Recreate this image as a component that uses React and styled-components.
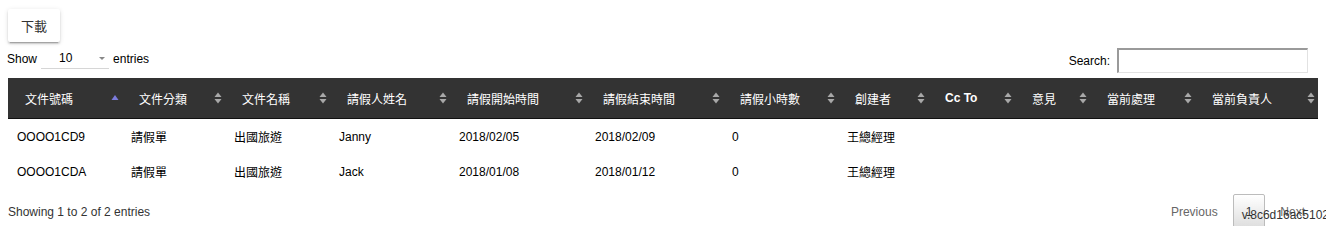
import styled, { createGlobalStyle } from 'styled-components';

const columns = [
  { key: 'no', label: '文件號碼', width: 114, sort: 'asc' },
  { key: 'type', label: '文件分類', width: 103 },
  { key: 'name', label: '文件名稱', width: 105 },
  { key: 'person', label: '請假人姓名', width: 120 },
  { key: 'start', label: '請假開始時間', width: 136 },
  { key: 'end', label: '請假結束時間', width: 137 },
  { key: 'hours', label: '請假小時數', width: 115 },
  { key: 'creator', label: '創建者', width: 90 },
  { key: 'cc', label: 'Cc To', width: 87, bold: true },
  { key: 'opinion', label: '意見', width: 75 },
  { key: 'current', label: '當前處理', width: 105 },
  { key: 'owner', label: '當前負責人', width: 123 },
];

const rows = [
  { no: 'OOOO1CD9', type: '請假單', name: '出國旅遊', person: 'Janny', start: '2018/02/05', end: '2018/02/09', hours: '0', creator: '王總經理' },
  { no: 'OOOO1CDA', type: '請假單', name: '出國旅遊', person: 'Jack', start: '2018/01/08', end: '2018/01/12', hours: '0', creator: '王總經理' },
];

const GlobalStyle = createGlobalStyle`
  html, body {
    margin: 0;
    height: 226px;
    overflow: hidden;
  }
  body {
    font-family: "Liberation Sans", Arial, "Noto Sans CJK TC", sans-serif;
    font-size: 12px;
    color: #333;
    background: #fff;
  }
`;

function SortIcon({ dir }) {
  if (dir === 'asc') {
    return (
      <svg width="8" height="12" viewBox="0 0 8 12">
        <path d="M4 3 L7.5 8 L0.5 8 Z" fill="#7b7bdc" />
      </svg>
    );
  }
  return (
    <svg width="8" height="12" viewBox="0 0 8 12">
      <path d="M4 0.5 L7.5 5 L0.5 5 Z" fill="#a8a8a8" />
      <path d="M4 11.5 L7.5 7 L0.5 7 Z" fill="#a8a8a8" />
    </svg>
  );
}

export default function App() {
  return (
    <Page>
      <GlobalStyle />
      <DownloadButton>下載</DownloadButton>
      <Controls>
        <LengthControl>
          Show
          <SelectBox>
            <span>10</span>
            <Caret />
          </SelectBox>
          entries
        </LengthControl>
        <Filter>
          Search:
          <SearchInput type="search" />
        </Filter>
      </Controls>
      <Table>
        <colgroup>
          {columns.map((c) => (
            <col key={c.key} style={{ width: c.width }} />
          ))}
        </colgroup>
        <thead>
          <tr>
            {columns.map((c) => (
              <Th key={c.key} $bold={c.bold}>
                <HeadInner>
                  <span>{c.label}</span>
                  <SortIcon dir={c.sort} />
                </HeadInner>
              </Th>
            ))}
          </tr>
        </thead>
        <tbody>
          {rows.map((r) => (
            <tr key={r.no}>
              {columns.map((c) => (
                <Td key={c.key}>{r[c.key] || ''}</Td>
              ))}
            </tr>
          ))}
        </tbody>
      </Table>
      <Footer>
        <Info>Showing 1 to 2 of 2 entries</Info>
        <Pagination>
          <PageButton>Previous</PageButton>
          <PageButton $current>1</PageButton>
          <PageButton>Next</PageButton>
        </Pagination>
      </Footer>
      <Version>v.8c6d16ac5102</Version>
    </Page>
  );
}

const Page = styled.div`
  position: relative;
  box-sizing: border-box;
  height: 226px;
  overflow: hidden;
  padding: 9px 8px 0 8px;
`;

const DownloadButton = styled.button`
  display: block;
  height: 33px;
  width: 52px;
  padding: 0;
  border: none;
  border-radius: 2px;
  background: #fff;
  color: #333;
  font-family: "Liberation Sans", "Noto Sans CJK TC", sans-serif;
  font-size: 13px;
  box-shadow: 0 2px 2px 0 rgba(0, 0, 0, 0.14), 0 1px 5px 0 rgba(0, 0, 0, 0.12),
    0 3px 1px -2px rgba(0, 0, 0, 0.2);
`;

const Controls = styled.div`
  display: flex;
  justify-content: space-between;
  align-items: flex-start;
  margin-top: 6px;
  height: 25px;
  color: #000;
`;

const LengthControl = styled.label`
  display: flex;
  align-items: center;
  height: 21px;
  margin-left: -1px;
`;

const SelectBox = styled.div`
  display: flex;
  align-items: center;
  justify-content: space-between;
  box-sizing: border-box;
  width: 68px;
  height: 21px;
  margin: 0 4px;
  padding: 0 4px 0 18px;
  border-bottom: 1px solid #d6d6d6;
`;

const Caret = styled.span`
  width: 0;
  height: 0;
  border-left: 3px solid transparent;
  border-right: 3px solid transparent;
  border-top: 3px solid #888;
`;

const Filter = styled.label`
  display: flex;
  align-items: center;
  height: 25px;
  margin-right: 10px;
`;

const SearchInput = styled.input`
  box-sizing: border-box;
  width: 191px;
  height: 25px;
  margin-left: 7px;
  border-style: solid;
  border-width: 2px 1px 1px 2px;
  border-color: #9a9a9a #e2e2e2 #e2e2e2 #9a9a9a;
  outline: none;
`;

const Table = styled.table`
  width: 100%;
  margin-top: 5px;
  border-collapse: collapse;
  table-layout: fixed;
`;

const Th = styled.th`
  height: 40px;
  padding: 0 3px 0 17px;
  background: #333;
  border-bottom: 1px solid #111;
  color: #fff;
  font-size: 12px;
  font-weight: ${(p) => (p.$bold ? 'bold' : 'normal')};
  text-align: left;
  white-space: nowrap;
`;

const HeadInner = styled.div`
  display: flex;
  align-items: center;
  justify-content: space-between;
`;

const Td = styled.td`
  height: 35px;
  padding: 0 10px 0 9px;
  color: #000;
  font-size: 12px;
  white-space: nowrap;
`;

const Footer = styled.div`
  display: flex;
  justify-content: space-between;
  align-items: center;
  padding-top: 5px;
`;

const Info = styled.div`
  color: #333;
`;

const Pagination = styled.div`
  display: flex;
  align-items: center;
`;

const PageButton = styled.span`
  box-sizing: border-box;
  height: 36px;
  line-height: 34px;
  padding: 0 12px;
  margin-left: 2px;
  border: 1px solid ${(p) => (p.$current ? '#bcbcbc' : 'transparent')};
  border-radius: 2px;
  color: ${(p) => (p.$current ? '#333' : '#666')};
  background: ${(p) =>
    p.$current ? 'linear-gradient(to bottom, #fff 0%, #dcdcdc 100%)' : 'transparent'};
`;

const Version = styled.div`
  position: absolute;
  right: -3px;
  bottom: 4px;
  color: #333;
  font-size: 12px;
`;
